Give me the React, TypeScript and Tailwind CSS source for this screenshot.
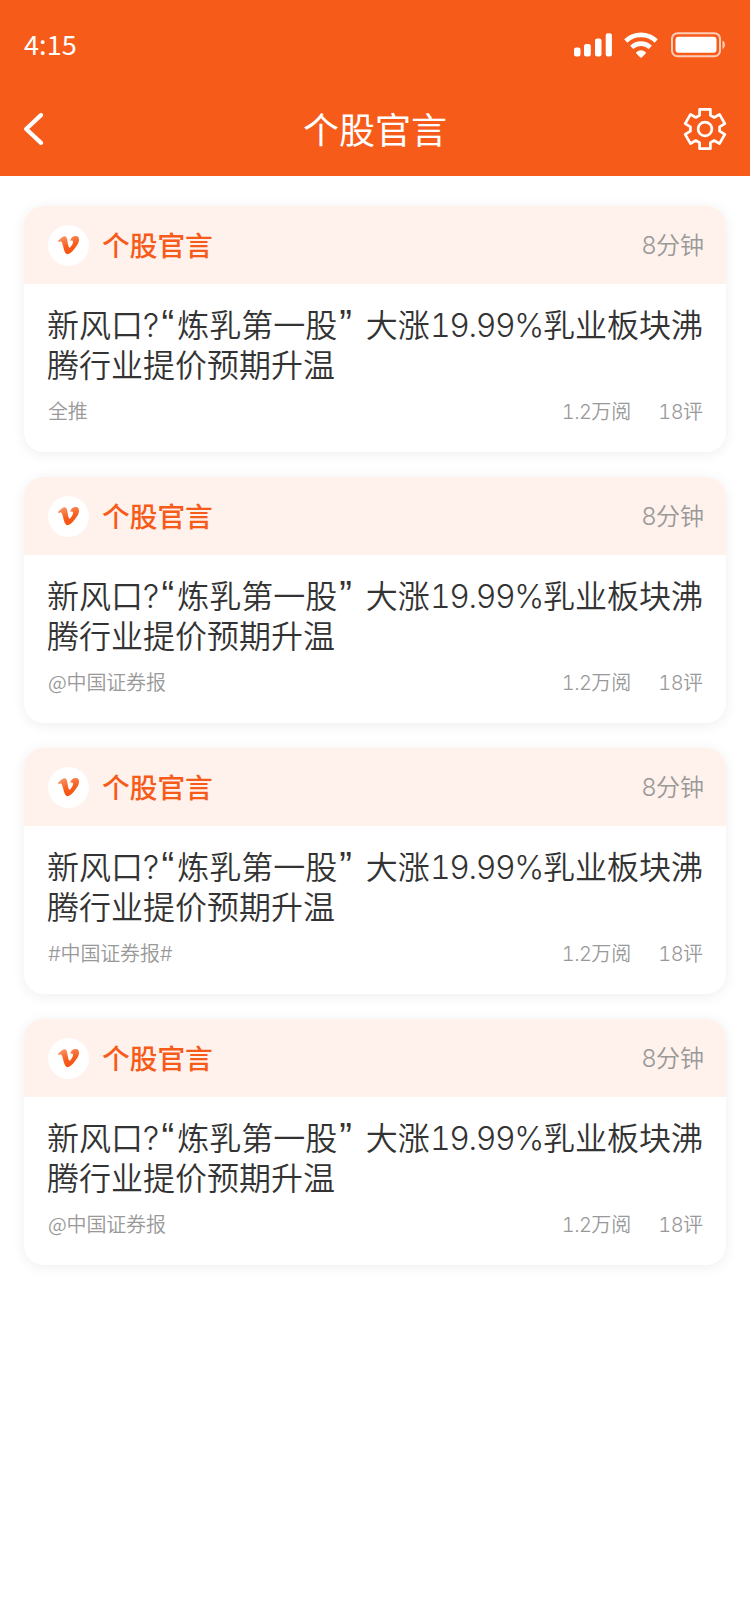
import React from "react";
import { FaVimeoV } from "react-icons/fa";

const items = ["全推", "@中国证券报", "#中国证券报#", "@中国证券报"];

function Latin({ children, className = "" }: { children: React.ReactNode; className?: string }) {
  return <span className={`font-['Inter'] leading-none font-light tabular-nums ${className}`}>{children}</span>;
}

function Quote({ children, className = "" }: { children: React.ReactNode; className?: string }) {
  return <span className={`font-['Liberation_Sans'] text-[38px] leading-none ${className}`}>{children}</span>;
}

function StatusBar() {
  return (
    <div className="flex h-[90px] items-center justify-between pl-6 pr-[25px]">
      <span className="pb-[4px] text-[27px] leading-none tracking-[0.1px]">4:15</span>
      <div className="flex items-center">
        <svg viewBox="0 0 38 24" className="mr-[12px] h-6 w-[38px]" fill="#fff">
          <rect x="0" y="14.500" width="6.500" height="9" rx="2.200" />
          <rect x="10" y="11" width="6.800" height="12.500" rx="2.200" />
          <rect x="21" y="5.500" width="6.500" height="18" rx="2.200" />
          <rect x="31.700" y="0.300" width="6.200" height="23.200" rx="2.200" />
        </svg>
        <svg viewBox="0 0 34 26" className="mr-[13px] h-[26px] w-[34px]">
          <g fill="none" stroke="#fff" strokeWidth="4.600">
            <path d="M1.800 9a22 22 0 0 1 30.400 0" />
            <path d="M7.700 15.300a13.500 13.500 0 0 1 18.600 0" />
          </g>
          <path d="M12.200 20.200a7.600 7.600 0 0 1 9.600 0q.5.600 0 1.100L18 25.300q-1 .9-2 0L12.200 21.300q-.5-.5 0-1.100z" fill="#fff" />
        </svg>
        <svg viewBox="0 0 54 26" className="h-[26px] w-[54px]">
          <rect x="1" y="1.200" width="48" height="23" rx="5.500" fill="none" stroke="#fff" strokeOpacity="0.7" strokeWidth="2" />
          <rect x="4.500" y="4.800" width="41" height="16" rx="3" fill="#fff" />
          <path d="M51.500 8.500c3.200 1.700 3.200 7 0 8.700z" fill="#fff" fillOpacity="0.7" />
        </svg>
      </div>
    </div>
  );
}

function NavBar() {
  return (
    <div className="grid h-[86px] grid-cols-[60px_1fr_60px] items-center px-6 pb-[8px]">
      <svg viewBox="0 0 20 32" className="h-8 w-5" fill="none" stroke="#fff" strokeWidth="4.200" strokeLinecap="round" strokeLinejoin="round">
        <path d="M17 2.100 L2.200 16 L17 29.900" />
      </svg>
      <h1 className="pb-[2px] text-center text-[36px] leading-[50px]">个股官言</h1>
      <svg viewBox="-22 -22 44 44" className="-mr-[1px] h-11 w-11 justify-self-end" fill="none" stroke="#fff" strokeWidth="2.700" strokeLinejoin="round">
        <path d="M-5.400 -13.700V-19.700H5.400V-13.700L9.200 -11.500L14.500 -14.600L19.900 -5.300L14.600 -2.200V2.200L19.900 5.300L14.500 14.600L9.200 11.500L5.400 13.700V19.700H-5.400V13.700L-9.200 11.500L-14.500 14.600L-19.900 5.300L-14.600 2.200V-2.200L-19.900 -5.300L-14.500 -14.600L-9.200 -11.500Z" />
        <circle r="6.900" />
      </svg>
    </div>
  );
}

function Card({ source }: { source: string }) {
  return (
    <article className="h-[246px] overflow-hidden rounded-[20px] bg-white shadow-[0_2px_14px_rgba(0,0,0,0.07)]">
      <header className="flex h-[78px] items-center bg-[#fff1eb] pr-[22px] pl-6">
        <div className="flex h-[41px] w-[41px] items-center justify-center rounded-full bg-white">
          <FaVimeoV className="h-[24px] w-[21px]" fill="url(#mark)" />
        </div>
        <h2 className="ml-[13px] flex-1 pb-[2px] text-[27.700px] leading-[40px] font-medium text-[#f65b1a]">个股官言</h2>
        <span className="pb-[2px] text-[24px] leading-[36px] font-[350] text-[#999]">
          <Latin className="tracking-[-0.800px]">8</Latin>分钟
        </span>
      </header>
      <div className="pt-[19px] pr-[23px] pl-[23px]">
        <p className="text-[32px] leading-[40px] font-[350] whitespace-nowrap text-[#333]">
          新风口<Latin className="tracking-[2.500px]">?</Latin><Quote className="mr-[3px]">“</Quote>炼乳第一股<Quote className="mr-[14px] ml-[2px]">”</Quote>大涨<Latin className="tracking-[-1.400px]">19.99%</Latin>乳业板块沸
          <br />
          腾行业提价预期升温
        </p>
        <div className="mt-[13px] flex pl-px text-[20px] leading-[30px] font-[350] text-[#999]">
          <span className="flex-1 tracking-[-0.150px]">
            {source.split(/(#)/).map((part, i) => (part === "#" ? <Latin key={i}>#</Latin> : part))}
          </span>
          <span><Latin className="tracking-[-0.600px]">1.2</Latin>万阅</span>
          <span className="ml-[27px]"><Latin className="tracking-[-0.600px]">18</Latin>评</span>
        </div>
      </div>
    </article>
  );
}

export default function App() {
  return (
    <div className="min-h-[1624px] w-[750px] bg-white font-['Noto_Sans_CJK_SC',sans-serif]">
      <div className="h-[176px] bg-[#f65b1a] text-white">
        <StatusBar />
        <NavBar />
      </div>
      <svg className="absolute h-0 w-0" aria-hidden="true">
        <linearGradient id="mark" x1="0.2" y1="0" x2="0.6" y2="1">
          <stop offset="0" stopColor="#fb9568" />
          <stop offset="0.6" stopColor="#f65d1c" />
          <stop offset="1" stopColor="#f55310" />
        </linearGradient>
      </svg>
      <main className="flex flex-col gap-[25px] px-6 pt-[30px]">
        {items.map((source, i) => (
          <Card key={i} source={source} />
        ))}
      </main>
    </div>
  );
}
